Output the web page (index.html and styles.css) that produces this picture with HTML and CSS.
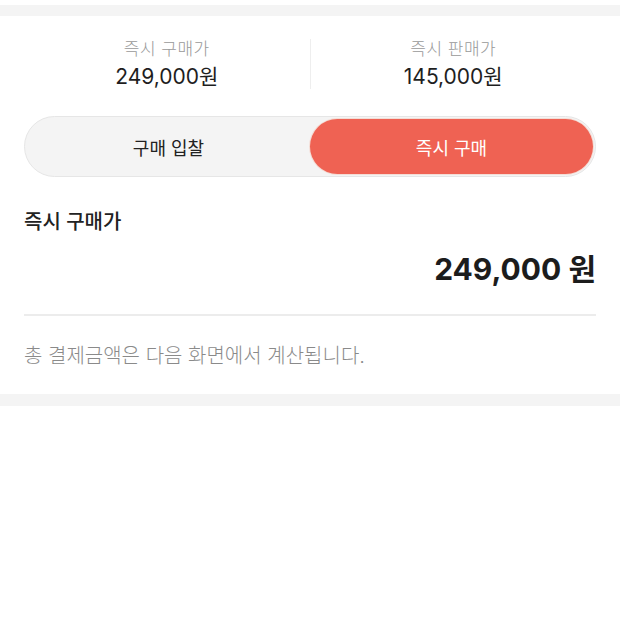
FILE: index.html
```html
<!DOCTYPE html>
<html lang="ko">
	<head>
		<meta charset="utf-8">
		<title>즉시 구매</title>
		<link rel="stylesheet" href="styles.css">
	</head>
	<body>

<div class="band band-top"></div>

<div class="stats">
	<div class="stat">
		<div class="stat-label">즉시 구매가</div>
		<div class="stat-value">249,000원</div>
	</div>
	<div class="stat-divider"></div>
	<div class="stat">
		<div class="stat-label">즉시 판매가</div>
		<div class="stat-value">145,000원</div>
	</div>
</div>

<div class="toggle">
	<div class="tab">구매 입찰</div>
	<div class="tab tab-on">즉시 구매</div>
</div>

<div class="price-box">
	<div class="price-label">즉시 구매가</div>
	<div class="price">249,000 원</div>
</div>

<p class="note">총 결제금액은 다음 화면에서 계산됩니다.</p>

<div class="band"></div>

	</body>
</html>
```

FILE: styles.css
```css
* { box-sizing: border-box; }

html, body {
	margin: 0;
	background: white;
}

body {
	padding-top: 5px;
	color: #222;
	font-family: Inter, "Noto Sans CJK KR", sans-serif;
}

.band {
	height: 12px;
	background: #f4f4f4;
}
.band-top {
	height: 11px;
}

/* top stats */
.stats {
	display: flex;
	align-items: center;
	margin: 0 24px;
	padding: 22px 0 26px;
}
.stat {
	flex: 1;
	text-align: center;
}
.stat-label {
	font-size: 17px;
	line-height: 22px;
	font-weight: 300;
	letter-spacing: 0.5px;
	color: #999;
}
.stat-value {
	margin-top: 4px;
	font-size: 21px;
	line-height: 26px;
	font-weight: 400;
	color: #1e1e1e;
}
.stat-divider {
	width: 1px;
	height: 50px;
	background: #eee;
}

/* buy / bid switch */
.toggle {
	display: flex;
	margin: 0 24px;
	padding: 2px;
	height: 61px;
	border: 1px solid #e6e6e6;
	border-radius: 31px;
	background: #f4f4f4;
}
.tab {
	flex: 1;
	display: flex;
	align-items: center;
	justify-content: center;
	border-radius: 28px;
	font-size: 18px;
	font-weight: 400;
	color: #222;
}
.tab-on {
	background: #ef6253;
	color: white;
	box-shadow: 0 0 0 1px #f4ddd6;
}

/* chosen price */
.price-box {
	margin: 0 24px;
	padding: 31px 0 27px;
	border-bottom: 2px solid #ececec;
}
.price-label {
	font-size: 20px;
	line-height: 28px;
	font-weight: 500;
	color: #222;
}
.price {
	margin-top: 15px;
	text-align: right;
	font-size: 30px;
	line-height: 36px;
	font-weight: 700;
	color: #1c1c1c;
}

.note {
	margin: 0;
	padding: 26px 24px 24px;
	font-size: 20px;
	line-height: 28px;
	font-weight: 300;
	color: #8a8a8a;
}
```
